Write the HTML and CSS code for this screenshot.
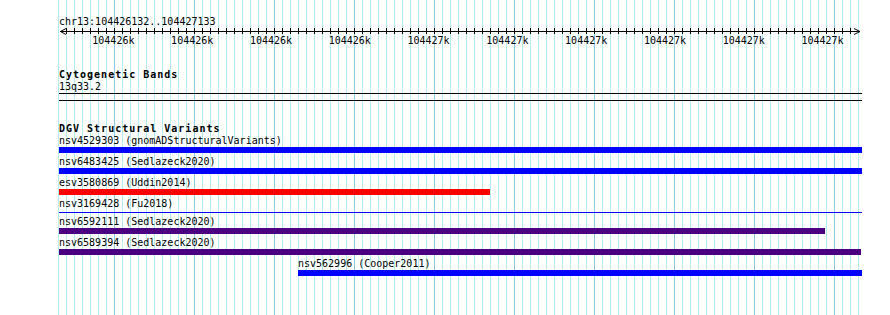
FILE: index.html
```html
<!DOCTYPE html>
<html lang="en">
<head>
<meta charset="UTF-8">
<meta name="viewport" content="width=device-width, initial-scale=1.0">
<title>chr13:104426132..104427133</title>
<link rel="stylesheet" href="styles.css">
</head>
<body>
<div class="tracks">
    <div class="ruler">
        <div class="ruler-title">chr13:104426132..104427133</div>
        <svg class="scale" width="806" height="7" viewBox="0 0 806 7">
            <line x1="1" y1="4.5" x2="801" y2="4.5" stroke="#000" stroke-width="1"/>
            <polyline points="7,1.5 1.5,4.5 7,7.5" fill="none" stroke="#000" stroke-width="1"/>
            <polyline points="795,1.5 801,4.5 795,7.5" fill="none" stroke="#000" stroke-width="1"/>
            <g id="ticks" stroke="#000" stroke-width="1"></g>
        </svg>
        <div class="scale-labels">
            <span>104426k</span>
            <span>104426k</span>
            <span>104426k</span>
            <span>104426k</span>
            <span>104427k</span>
            <span>104427k</span>
            <span>104427k</span>
            <span>104427k</span>
            <span>104427k</span>
            <span>104427k</span>
        </div>
    </div>

    <div class="track">
        <div class="track-title">Cytogenetic Bands</div>
        <div class="band-name">13q33.2</div>
        <div class="band"></div>
    </div>

    <div class="track track-dgv">
        <div class="track-title">DGV Structural Variants</div>
        <div class="feature" style="margin-left:0;width:803px">
            <div class="feature-label">nsv4529303 (gnomADStructuralVariants)</div>
            <div class="bar bar-blue"></div>
        </div>
        <div class="feature" style="margin-left:0;width:803px">
            <div class="feature-label">nsv6483425 (Sedlazeck2020)</div>
            <div class="bar bar-blue"></div>
        </div>
        <div class="feature" style="margin-left:0;width:431px">
            <div class="feature-label">esv3580869 (Uddin2014)</div>
            <div class="bar bar-red"></div>
        </div>
        <div class="feature" style="margin-left:0;width:803px">
            <div class="feature-label">nsv3169428 (Fu2018)</div>
            <div class="bar bar-line"></div>
        </div>
        <div class="feature" style="margin-left:0;width:766px">
            <div class="feature-label">nsv6592111 (Sedlazeck2020)</div>
            <div class="bar bar-purple"></div>
        </div>
        <div class="feature" style="margin-left:0;width:802px">
            <div class="feature-label">nsv6589394 (Sedlazeck2020)</div>
            <div class="bar bar-purple"></div>
        </div>
        <div class="feature" style="margin-left:239px;width:564px">
            <div class="feature-label">nsv562996 (Cooper2011)</div>
            <div class="bar bar-blue"></div>
        </div>
    </div>
</div>
<script>
    // minor ticks every 8px along the scale bar
    var ticks = document.getElementById('ticks');
    for (var x = 7.5; x < 795; x += 8) {
        var t = document.createElementNS('http://www.w3.org/2000/svg', 'line');
        t.setAttribute('x1', x);
        t.setAttribute('x2', x);
        t.setAttribute('y1', 1);
        t.setAttribute('y2', 7);
        ticks.appendChild(t);
    }
</script>
</body>
</html>
```

FILE: styles.css
```css
html, body {
    margin: 0;
    padding: 0;
}

body {
    width: 890px;
    height: 315px;
    overflow: hidden;
    background-color: #fff;
    background-image:
        repeating-linear-gradient(to right, transparent 0 56px, #8ccae6 56px 57px, transparent 57px 80px),
        repeating-linear-gradient(to right, #b4ecf0 0 1px, transparent 1px 8px);
    background-position: 58px 0;
    background-size: 801px 100%;
    background-repeat: no-repeat;
    font-family: "DejaVu Sans Mono", "Liberation Mono", monospace;
    font-size: 10px;
    color: #000;
}

.tracks {
    margin-left: 59px;
    width: 803px;
    padding-top: 16px;
}

.ruler-title {
    line-height: 11px;
    white-space: nowrap;
}

.scale {
    display: block;
    overflow: visible;
}

.scale-labels {
    display: flex;
    margin-left: 15px;
    padding-top: 1px;
    line-height: 12px;
}
.scale-labels span {
    width: 80px;
    text-align: center;
}

.track {
    margin-top: 22px;
}

.track-title {
    font-weight: bold;
    letter-spacing: 1px;
    line-height: 12px;
    white-space: nowrap;
}

.band-name {
    line-height: 11px;
}

.band {
    margin-top: 1px;
    height: 6px;
    border-top: 1px solid #000;
    border-bottom: 1px solid #000;
}

.track-dgv {
    margin-top: 22px;
}

.feature {
    margin-bottom: 3px;
}

.feature-label {
    line-height: 11px;
    white-space: nowrap;
}

.bar {
    margin-top: 1px;
    height: 6px;
}

.bar-blue {
    background-color: #0000ff;
}

.bar-red {
    background-color: #ff0000;
}

.bar-purple {
    background-color: #4b0082;
}

.bar-line {
    height: 1px;
    margin-top: 3px;
    margin-bottom: 3px;
    background-color: #0000ff;
}
```
